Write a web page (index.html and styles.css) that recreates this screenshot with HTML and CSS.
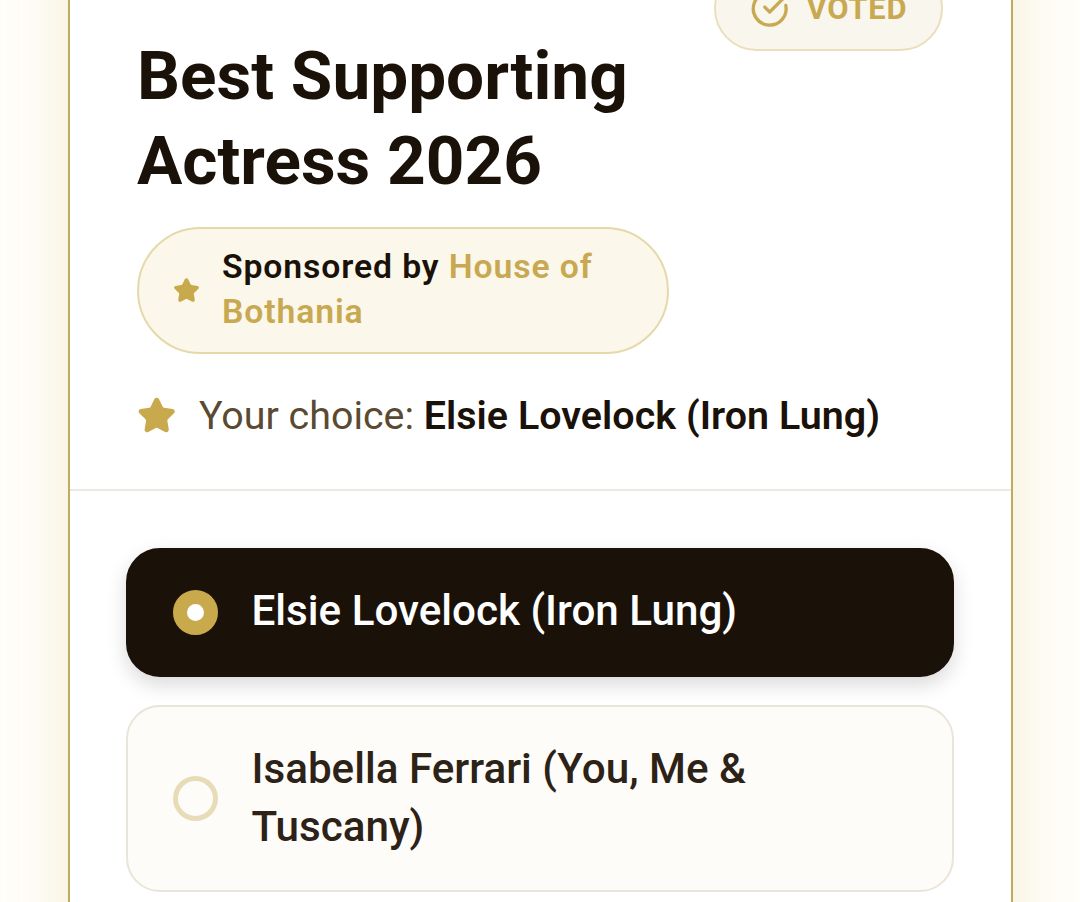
FILE: index.html
```html
<!DOCTYPE html>
<html lang="en">
<head>
  <meta charset="UTF-8">
  <meta name="viewport" content="width=device-width, initial-scale=1.0">
  <title>Best Supporting Actress 2026</title>
  <link rel="stylesheet" href="styles.css">
</head>
<body>

<main class="poll-card">
  <header class="poll-header">
    <div class="heading-row">
      <div class="heading">
        <h1>Best Supporting Actress 2026</h1>
        <div class="sponsor">
          <svg class="star-small" viewBox="0 0 24 24"><path d="M11.525 2.295a.53.53 0 0 1 .95 0l2.31 4.679a2.123 2.123 0 0 0 1.595 1.16l5.166.756a.53.53 0 0 1 .294.904l-3.736 3.638a2.123 2.123 0 0 0-.611 1.878l.882 5.14a.53.53 0 0 1-.771.56l-4.618-2.428a2.122 2.122 0 0 0-1.973 0L6.396 21.01a.53.53 0 0 1-.77-.56l.881-5.139a2.122 2.122 0 0 0-.611-1.879L2.16 9.795a.53.53 0 0 1 .294-.906l5.165-.755a2.122 2.122 0 0 0 1.597-1.16z"/></svg>
          <p>Sponsored by <span>House of Bothania</span></p>
        </div>
      </div>
      <div class="voted">
        <svg viewBox="0 0 24 24"><path d="M21.801 10A10 10 0 1 1 17 3.335"/><path d="m9 11 3 3L22 4"/></svg>
        <span>VOTED</span>
      </div>
    </div>
    <div class="choice">
      <svg class="star" viewBox="0 0 24 24"><path d="M11.525 2.295a.53.53 0 0 1 .95 0l2.31 4.679a2.123 2.123 0 0 0 1.595 1.16l5.166.756a.53.53 0 0 1 .294.904l-3.736 3.638a2.123 2.123 0 0 0-.611 1.878l.882 5.14a.53.53 0 0 1-.771.56l-4.618-2.428a2.122 2.122 0 0 0-1.973 0L6.396 21.01a.53.53 0 0 1-.77-.56l.881-5.139a2.122 2.122 0 0 0-.611-1.879L2.16 9.795a.53.53 0 0 1 .294-.906l5.165-.755a2.122 2.122 0 0 0 1.597-1.16z"/></svg>
      <p>Your choice: <strong>Elsie Lovelock (Iron Lung)</strong></p>
    </div>
  </header>

  <div class="options">
    <div class="option selected">
      <span class="radio"></span>
      <span class="label">Elsie Lovelock (Iron Lung)</span>
    </div>
    <div class="option">
      <span class="radio"></span>
      <span class="label">Isabella Ferrari (You, Me &amp; Tuscany)</span>
    </div>
  </div>
</main>

</body>
</html>
```

FILE: styles.css
```css
* {
  box-sizing: border-box;
}

body {
  margin: 0;
  height: 902px;
  overflow: hidden;
  display: flow-root;
  font-family: Roboto, sans-serif;
  color: #1a1109;
  background: #fffefa;
}

h1, p {
  margin: 0;
}

/* the card runs past the top and bottom of the screen */
.poll-card {
  width: 945px;
  height: 1102px;
  margin: -100px 0 0 68px;
  padding-top: 100px;
  background: white;
  border: solid #c2aa5c;
  border-width: 0 2px;
  box-shadow: 0 0 68px rgba(200, 169, 60, 0.2);
}

.poll-header {
  height: 491px;
  padding: 0 68px 0 67px;
  border-bottom: 2px solid #ebe9e0;
}

.heading-row {
  display: flex;
  justify-content: space-between;
}

.heading {
  width: 532px;
  padding-top: 34px;
}

h1 {
  font-size: 67.5px;
  line-height: 84.5px;
  font-weight: 700;
}

.sponsor {
  display: flex;
  align-items: center;
  gap: 22px;
  height: 127px;
  margin-top: 24px;
  padding: 0 34px;
  border: 2px solid #e6d9a9;
  border-radius: 64px;
  background: #fbf7eb;
}

.sponsor p {
  margin-bottom: 4px;
  font-size: 33.75px;
  line-height: 45px;
  font-weight: 600;
  letter-spacing: 0.88px;
}

.sponsor span {
  color: #c8a951;
}

.star-small, .star {
  flex: none;
  fill: #c8a94b;
  stroke: #c8a94b;
  stroke-width: 2;
  stroke-linejoin: round;
}

.star-small {
  width: 27px;
  height: 27px;
}

.star {
  width: 39.4px;
  height: 39.4px;
}

.voted {
  display: flex;
  align-items: center;
  gap: 17px;
  width: 229px;
  height: 85px;
  margin-top: -34px;
  padding-left: 34px;
  border: 2px solid #eadfbd;
  border-radius: 43px;
  background: #f9f6ee;
  color: #c8a951;
  font-size: 30.9px;
  font-weight: 700;
  letter-spacing: 0.85px;
}

.voted svg {
  width: 39.4px;
  height: 39.4px;
  fill: none;
  stroke: #c8a951;
  stroke-width: 2;
  stroke-linecap: round;
  stroke-linejoin: round;
}

.choice {
  display: flex;
  align-items: center;
  gap: 22.5px;
  margin-top: 33px;
  font-size: 39.4px;
  line-height: 58px;
  color: #5a4a32;
}

.choice strong {
  font-weight: 600;
  letter-spacing: 0.04px;
  color: #1a1109;
}

.options {
  display: flex;
  flex-direction: column;
  gap: 28px;
  padding: 57px 57px 0 56px;
}

.option {
  display: flex;
  align-items: center;
  gap: 33.5px;
  padding: 33px 45px;
  border: 2px solid #e9e5d9;
  border-radius: 34px;
  background: #fdfcf8;
  color: #2c2217;
  font-size: 42.2px;
  line-height: 58px;
  font-weight: 500;
}

.label {
  margin-bottom: 1px;
}

.selected {
  border-color: #1a1109;
  background: #1a1109;
  color: white;
  box-shadow: 0 8px 20px rgba(0, 0, 0, 0.15);
}

.selected .label {
  margin: -1px 0 2px;
}

.radio {
  flex: none;
  width: 45px;
  height: 45px;
  border: 5px solid #e8dcb8;
  border-radius: 50%;
}

.selected .radio {
  border: 14px solid #c8a94b;
  background: white;
}
```
